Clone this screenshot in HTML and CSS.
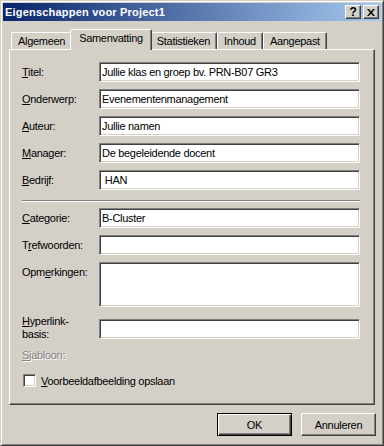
FILE: index.html
```html
<!DOCTYPE html>
<html>
<head>
    <meta charset="UTF-8">
    <title>Eigenschappen voor Project1</title>
    <link rel="stylesheet" href="styles.css">
</head>
<body>
    <div class="window">
        <div class="titlebar">
            <span class="title">Eigenschappen voor Project1</span>
            <div class="caption-buttons">
                <div class="cap-btn help">?</div>
                <div class="cap-btn">
                    <svg width="8" height="7" viewBox="0 0 8 7">
                        <path d="M0 0h2l2 2.5 2-2.5h2L5 3.5 8 7H6L4 4.5 2 7H0l3-3.5z" fill="#000"/>
                    </svg>
                </div>
            </div>
        </div>

        <div class="tabs">
            <div class="tab">Algemeen</div>
            <div class="tab active">Samenvatting</div>
            <div class="tab">Statistieken</div>
            <div class="tab">Inhoud</div>
            <div class="tab">Aangepast</div>
        </div>

        <div class="panel">
            <div class="fields">
                <label class="lbl"><u>T</u>itel:</label>
                <input class="field" type="text" value="Jullie klas en groep bv. PRN-B07 GR3">
                <label class="lbl"><u>O</u>nderwerp:</label>
                <input class="field" type="text" value="Evenementenmanagement">
                <label class="lbl"><u>A</u>uteur:</label>
                <input class="field" type="text" value="Jullie namen">
                <label class="lbl"><u>M</u>anager:</label>
                <input class="field" type="text" value="De begeleidende docent">
                <label class="lbl"><u>B</u>edrijf:</label>
                <input class="field" type="text" value=" HAN">
            </div>

            <div class="separator"></div>

            <div class="fields">
                <label class="lbl"><u>C</u>ategorie:</label>
                <input class="field" type="text" value="B-Cluster">
                <label class="lbl">T<u>r</u>efwoorden:</label>
                <input class="field" type="text" value="">
                <label class="lbl top">Opm<u>e</u>rkingen:</label>
                <textarea class="field memo"></textarea>
                <label class="lbl top two-line"><u>H</u>yperlink-<br>basis:</label>
                <input class="field link" type="text" value="">
            </div>

            <div class="disabled"><u>S</u>jabloon:</div>

            <label class="check">
                <span class="box"></span>
                <span><u>V</u>oorbeeldafbeelding opslaan</span>
            </label>
        </div>

        <div class="actions">
            <button class="btn default">OK</button>
            <button class="btn">Annuleren</button>
        </div>
    </div>
</body>
</html>
```

FILE: styles.css
```css
* {
    box-sizing: border-box;
}

body {
    margin: 0;
    font-family: "Liberation Sans", Arial, sans-serif;
    font-size: 11px;
    letter-spacing: -0.3px;
    color: #000;
}

.window {
    width: 384px;
    height: 446px;
    background-color: #d4d0c8;
    border: 1px solid;
    border-color: #d4d0c8 #404040 #404040 #d4d0c8;
    box-shadow: inset 1px 1px #fff, inset -1px -1px #808080;
    padding: 2px;
}

.titlebar {
    height: 18px;
    display: flex;
    align-items: center;
    justify-content: space-between;
    padding-left: 2px;
    background: linear-gradient(to right, #0a246a, #a6caf0);
}

.title {
    color: #fff;
    font-weight: bold;
    letter-spacing: 0.2px;
}

.caption-buttons {
    display: flex;
    gap: 2px;
    margin-right: 2px;
}

.cap-btn {
    width: 16px;
    height: 14px;
    display: flex;
    align-items: center;
    justify-content: center;
    background-color: #d4d0c8;
    border: 1px solid;
    border-color: #fff #404040 #404040 #fff;
    box-shadow: inset -1px -1px #808080;
}

.help {
    font-weight: bold;
    font-size: 12px;
    line-height: 12px;
}

.tabs {
    display: flex;
    align-items: flex-end;
    height: 20px;
    margin: 8px 0 0 8px;
}

.tab {
    height: 17px;
    padding: 2px 6px 0;
    border: 1px solid;
    border-bottom: 0;
    border-color: #fff #404040 transparent #fff;
    border-radius: 2px 2px 0 0;
    box-shadow: inset -1px 0 #808080;
    line-height: 13px;
}

.tab.active {
    position: relative;
    z-index: 1;
    height: 21px;
    margin: 0 -2px -1px;
    padding: 2px 8px 0;
    background-color: #d4d0c8;
}

.panel {
    height: 356px;
    margin: 0 6px;
    border: 1px solid;
    border-color: #fff #404040 #404040 #fff;
    box-shadow: inset -1px -1px #808080;
    padding: 12px 14px 0 12px;
}

.fields {
    display: grid;
    grid-template-columns: 77px 1fr;
    row-gap: 7px;
    align-items: center;
}

.lbl.top {
    align-self: start;
    padding-top: 4px;
}

.lbl.two-line {
    padding-top: 1px;
    line-height: 13px;
}

.field {
    height: 20px;
    width: 100%;
    margin: 0;
    padding: 0 2px;
    font: inherit;
    letter-spacing: inherit;
    color: #000;
    background-color: #fff;
    border: 1px solid;
    border-color: #808080 #fff #fff #808080;
    box-shadow: inset 1px 1px #404040, inset -1px -1px #d4d0c8;
    outline: 0;
}

.memo {
    height: 45px;
    resize: none;
}

.link {
    margin-top: 3px;
}

.separator {
    height: 2px;
    margin: 10px 0 6px;
    border-top: 1px solid #808080;
    border-bottom: 1px solid #fff;
}

.disabled {
    margin-top: 8px;
    color: #808080;
    text-shadow: 1px 1px 0 #fff;
}

.check {
    display: flex;
    align-items: center;
    gap: 5px;
    margin-top: 13px;
    padding-left: 1px;
}

.box {
    width: 13px;
    height: 13px;
    background-color: #fff;
    border: 1px solid;
    border-color: #808080 #fff #fff #808080;
    box-shadow: inset 1px 1px #404040, inset -1px -1px #d4d0c8;
}

.actions {
    display: flex;
    justify-content: flex-end;
    gap: 9px;
    margin-top: 8px;
    padding-right: 5px;
}

.btn {
    width: 75px;
    height: 23px;
    padding: 0;
    font: inherit;
    letter-spacing: inherit;
    color: #000;
    background-color: #d4d0c8;
    border: 1px solid;
    border-color: #fff #404040 #404040 #fff;
    box-shadow: inset -1px -1px #808080;
}

.btn.default {
    border: 1px solid #000;
    box-shadow: inset 1px 1px #fff, inset -1px -1px #404040, inset -2px -2px #808080;
}
```
